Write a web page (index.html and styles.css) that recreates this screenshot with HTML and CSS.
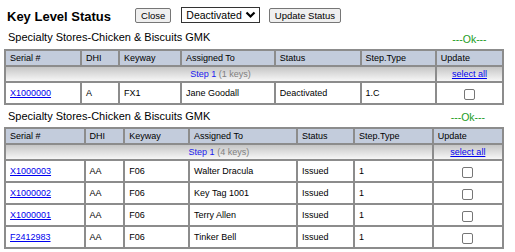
FILE: index.html
```html
<!DOCTYPE html>
<html lang="en">
<head>
  <meta charset="UTF-8">
  <title>Key Level Status</title>
  <link rel="stylesheet" href="styles.css">
</head>
<body>

<div class="topbar">
  <h1>Key Level Status</h1>
  <button class="btn close-btn">Close</button>
  <div class="status-select">
    <span>Deactivated</span>
    <svg width="11" height="8" viewBox="0 0 11 8"><path d="M1.5 1.5 L5.5 5.5 L9.5 1.5" fill="none" stroke="#000" stroke-width="2.2"/></svg>
  </div>
  <button class="btn">Update Status</button>
</div>

<!-- deactivated group -->
<table class="keys">
  <tr class="group-row">
    <td colspan="6" class="group-name">Specialty Stores-Chicken &amp; Biscuits GMK</td>
    <td class="ok">---Ok---</td>
  </tr>
  <tr class="head">
    <th>Serial #</th><th>DHI</th><th>Keyway</th><th>Assigned To</th><th>Status</th><th>Step.Type</th><th>Update</th>
  </tr>
  <tr class="step">
    <td colspan="6"><span class="step-no">Step 1</span> <span class="step-count">(1 keys)</span></td>
    <td class="sel-all"><a href="#">select all</a></td>
  </tr>
  <tr class="key-row">
    <td><a href="#">X1000000</a></td><td>A</td><td>FX1</td><td>Jane Goodall</td><td>Deactivated</td><td>1.C</td>
    <td class="chk"><input type="checkbox"></td>
  </tr>
</table>

<!-- issued group -->
<table class="keys second">
  <tr class="group-row">
    <td colspan="6" class="group-name">Specialty Stores-Chicken &amp; Biscuits GMK</td>
    <td class="ok">---Ok---</td>
  </tr>
  <tr class="head">
    <th>Serial #</th><th>DHI</th><th>Keyway</th><th>Assigned To</th><th>Status</th><th>Step.Type</th><th>Update</th>
  </tr>
  <tr class="step">
    <td colspan="6"><span class="step-no">Step 1</span> <span class="step-count">(4 keys)</span></td>
    <td class="sel-all"><a href="#">select all</a></td>
  </tr>
  <tr class="key-row">
    <td><a href="#">X1000003</a></td><td>AA</td><td>F06</td><td>Walter Dracula</td><td>Issued</td><td>1</td>
    <td class="chk"><input type="checkbox"></td>
  </tr>
  <tr class="key-row">
    <td><a href="#">X1000002</a></td><td>AA</td><td>F06</td><td>Key Tag 1001</td><td>Issued</td><td>1</td>
    <td class="chk"><input type="checkbox"></td>
  </tr>
  <tr class="key-row">
    <td><a href="#">X1000001</a></td><td>AA</td><td>F06</td><td>Terry Allen</td><td>Issued</td><td>1</td>
    <td class="chk"><input type="checkbox"></td>
  </tr>
  <tr class="key-row">
    <td><a href="#">F2412983</a></td><td>AA</td><td>F06</td><td>Tinker Bell</td><td>Issued</td><td>1</td>
    <td class="chk"><input type="checkbox"></td>
  </tr>
</table>

</body>
</html>
```

FILE: styles.css
```css
body {
  font-family: 'Liberation Sans', Arial, sans-serif;
  margin: 0;
  padding: 4px;
  background: white;
  color: #000;
}
.topbar {
  display: flex;
  align-items: center;
  height: 22px;
  padding: 0 3px;
}
.topbar h1 {
  font-size: 13px;
  font-weight: bold;
  margin: 0 24px 0 0;
  padding-top: 2px;
}
.btn {
  font-family: 'Liberation Sans', Arial, sans-serif;
  font-size: 9.5px;
  height: 15px;
  padding: 0 5px;
  background: #efefef;
  border: 1px solid #767676;
  border-radius: 2px;
  color: #000;
}
.close-btn {
  margin-right: 10px;
}
.status-select {
  display: flex;
  align-items: center;
  gap: 3px;
  height: 14px;
  padding: 0 3px 0 4px;
  border: 1px solid #333;
  font-size: 10.5px;
  margin-right: 9px;
}
.keys {
  width: 500px;
  border-collapse: collapse;
  font-size: 9px;
  line-height: 11px;
}
.keys td, .keys th {
  border: 2px solid #8c8c8c;
  padding: 0 4px;
  text-align: left;
  font-weight: normal;
}
.keys a {
  color: #0000ee;
}
.group-row td {
  border: none;
  height: 20px;
  padding: 0 3px;
}
.second .group-row td {
  height: 19px;
}
.group-name {
  font-size: 11px;
  vertical-align: middle;
}
.keys td.ok {
  color: #1c9c1c;
  font-size: 10.5px;
  text-align: center;
  padding-top: 3px;
}
.head th {
  background: #c3ccdc;
  height: 14px;
}
.step td {
  background: linear-gradient(#c6c6c6, #f6f6f6);
  height: 14px;
  text-align: center;
}
.step-no {
  color: #1a1aee;
}
.step-count {
  color: #808080;
}
.keys td.sel-all {
  text-align: center;
}
.key-row td {
  height: 20px;
}
.keys td.chk {
  text-align: center;
}
.chk input {
  appearance: none;
  width: 11px;
  height: 11px;
  margin: 2px 0 0;
  border: 1px solid #767676;
  border-radius: 2px;
  background: white;
  vertical-align: middle;
}
```
